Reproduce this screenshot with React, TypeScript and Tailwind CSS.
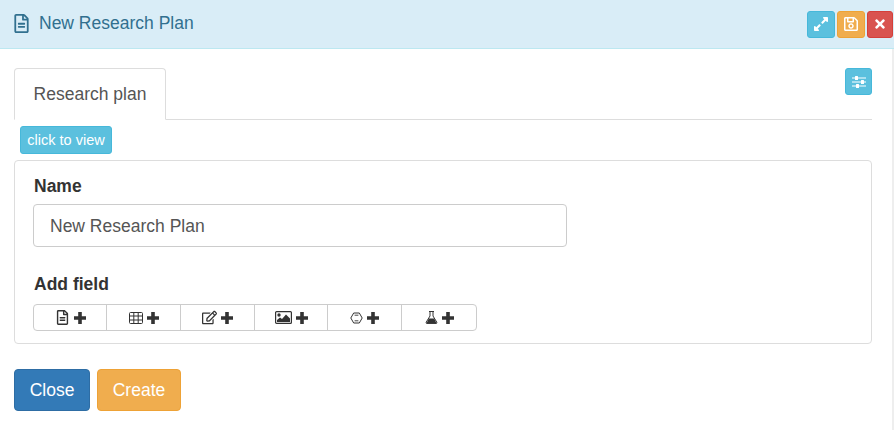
import React from "react";
import { FaRegFileAlt, FaExpandAlt, FaRegSave, FaTimes, FaRegEdit } from "react-icons/fa";

function Plus() {
  return (
    <svg width="12" height="12" viewBox="0 0 12 12" fill="#333" className="shrink-0">
      <path d="M4.2 0H7.8V4.2H12V7.8H7.8V12H4.2V7.8H0V4.2H4.2Z" />
    </svg>
  );
}

function Table() {
  return (
    <svg width="14" height="12" viewBox="0 0 14 12" fill="none" stroke="#333" strokeWidth="1">
      <rect x="0.5" y="0.5" width="13" height="11" rx="1" />
      <path d="M0.5 4H13.5M0.5 8H13.5M4.8 0.5V11.5M9.2 0.5V11.5" />
    </svg>
  );
}

function Picture() {
  return (
    <svg width="17" height="13" viewBox="0 0 17 13">
      <rect x="0.6" y="0.6" width="15.8" height="11.8" rx="1" fill="none" stroke="#333" strokeWidth="1.2" />
      <circle cx="4" cy="4" r="1.7" fill="#333" />
      <path d="M2 11V9L5 6.5L7 8L11 3.5L15 7.5V11Z" fill="#333" />
    </svg>
  );
}

function Hex() {
  return (
    <svg width="13" height="12" viewBox="0 0 13 12" fill="none" stroke="#333" strokeWidth="1">
      <path d="M3.7 1H9.3L12.2 6L9.3 11H3.7L0.8 6Z" />
      <path d="M4.6 3.2H8.4M4.6 8.8H8.4" strokeWidth="0.9" />
    </svg>
  );
}

function Flask() {
  return (
    <svg width="13" height="13" viewBox="0 0 13 13">
      <path d="M4 0.5H9M5 1V5L1.2 11.2Q0.8 12.4 2 12.4H11Q12.2 12.4 11.8 11.2L8 5V1" fill="none" stroke="#333" strokeWidth="1" />
      <path d="M3.8 7.5H9.2L11.6 12.4H1.4Z" fill="#333" />
    </svg>
  );
}

function Sliders() {
  return (
    <svg width="14" height="12" viewBox="0 0 14 12" fill="white">
      <rect x="0" y="1.5" width="14" height="1" />
      <rect x="0" y="5.5" width="14" height="1" />
      <rect x="0" y="9.5" width="14" height="1" />
      <rect x="3" y="0" width="3" height="4" rx="0.5" />
      <rect x="9" y="4" width="3" height="4" rx="0.5" />
      <rect x="4" y="8" width="3" height="4" rx="0.5" />
    </svg>
  );
}

const fields = [
  { w: "w-[73px]", icon: <FaRegFileAlt size={15} /> },
  { w: "w-[74px]", icon: <Table /> },
  { w: "w-[74px]", icon: <FaRegEdit size={15} /> },
  { w: "w-[73px]", icon: <Picture /> },
  { w: "w-[74px]", icon: <Hex /> },
  { w: "w-[74px]", icon: <Flask /> },
];

export default function App() {
  return (
    <div className="relative w-[894px] h-[430px] overflow-hidden bg-white font-['Liberation_Sans',Arial,sans-serif] text-[#333] flex flex-col">
      <header className="h-[49px] shrink-0 bg-[#d9edf7] border-b border-[#bce8f1] flex items-center justify-between pl-[12px] pr-[1px]">
        <div className="flex items-center gap-[8px] text-[#31708f] pb-[2px]">
          <FaRegFileAlt size={19} />
          <span className="text-[17.5px]">New Research Plan</span>
        </div>
        <div className="flex gap-[2px]">
          <button className="w-[28px] h-[27px] rounded-[3px] bg-[#5bc0de] border border-[#46b8da] text-white flex items-center justify-center"><FaExpandAlt size={16} /></button>
          <button className="w-[28px] h-[27px] rounded-[3px] bg-[#f0ad4e] border border-[#eea236] text-white flex items-center justify-center"><FaRegSave size={16} /></button>
          <button className="w-[26px] h-[27px] rounded-[3px] bg-[#d9534f] border border-[#d43f3a] text-white flex items-center justify-center"><FaTimes size={14} /></button>
        </div>
      </header>
      <main className="flex-1 flex pr-[2px]">
        <div className="flex-1 pl-[14px] pr-[20px] pt-[19px]">
          <div className="relative h-[52px] border-b border-[#ddd]">
            <div className="w-[152px] h-[52px] bg-white border border-[#ddd] border-b-white rounded-t-[4px] flex items-center justify-center text-[#555] text-[17.5px]">Research plan</div>
            <button className="absolute right-0 top-0 w-[27px] h-[27px] rounded-[3px] bg-[#5bc0de] border border-[#46b8da] text-white flex items-center justify-center"><Sliders /></button>
          </div>
          <div className="pl-[6px] pt-[6px] h-[34px]">
            <button className="h-[28px] w-[92px] rounded-[3px] bg-[#5bc0de] border border-[#46b8da] text-white text-[14.5px] leading-none">click to view</button>
          </div>
          <section className="mt-[6px] h-[184px] border border-[#ddd] rounded-[4px] pl-[18px] pt-[15px]">
            <label className="block ml-px font-bold text-[17.5px] leading-[20px]">Name</label>
            <div className="mt-[8px] w-[534px] h-[43px] border border-[#ccc] rounded-[4px] flex items-center pl-[16px] pt-[1px] text-[17.5px] text-[#555]">New Research Plan</div>
            <label className="block ml-px mt-[27px] font-bold text-[17.5px] leading-[20px]">Add field</label>
            <div className="mt-[10px] flex w-[444px] h-[27px] border border-[#ccc] rounded-[4px] divide-x divide-[#ccc]">
              {fields.map((f, i) => (
                <div key={i} className={`${f.w} flex items-center justify-center gap-[4px] text-[#333]`}>
                  {f.icon}
                  <Plus />
                </div>
              ))}
            </div>
          </section>
          <div className="mt-[25px] flex gap-[7px]">
            <button className="w-[76px] h-[42px] rounded-[4px] bg-[#337ab7] border border-[#2e6da4] text-white text-[17.5px]">Close</button>
            <button className="w-[84px] h-[42px] rounded-[4px] bg-[#f0ad4e] border border-[#eea236] text-white text-[17.5px]">Create</button>
          </div>
        </div>
      </main>
      <div className="absolute right-0 top-[49px] bottom-0 w-[2px] bg-[#eee]" />
    </div>
  );
}
